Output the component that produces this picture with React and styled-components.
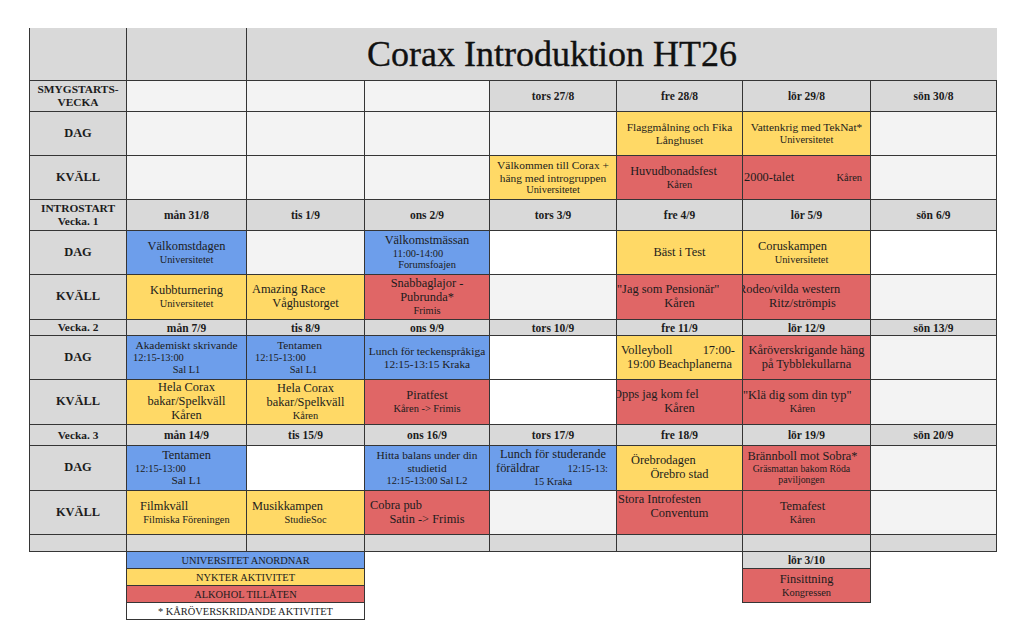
import React from 'react';
import styled, { createGlobalStyle } from 'styled-components';

const GlobalStyle = createGlobalStyle`
  html, body {
    margin: 0;
    padding: 0;
    background: #ffffff;
  }
  body {
    font-family: "Liberation Serif", "Times New Roman", serif;
    color: #1c1c1c;
  }
`;

// column / row tracks measured off the sheet (each includes its 1px grid line)
const COLS = '97px 120px 118px 125px 127px 126px 128px 126px';
const ROWS = '53px 31px 44px 44px 31px 44px 45px 16px 44px 45px 21px 45px 44px 17px';
const LINE = '#353535';

const FILL = {
  blue: '#6d9eeb',
  yellow: '#ffd966',
  red: '#e06666',
  white: '#ffffff',
  light: '#f3f3f3',
  gray: '#d9d9d9',
};

const SIZE = { L: 12.4, M: 11.4, S: 10.4, XS: 9.8 };

const Page = styled.div`
  padding: 28px 0 0 29px;
`;

const Table = styled.div`
  display: grid;
  grid-template-columns: ${COLS};
  grid-template-rows: ${ROWS};
  width: max-content;
  border-left: 1px solid ${LINE};
`;

const Cell = styled.div`
  box-sizing: border-box;
  min-width: 0;
  overflow: hidden;
  display: flex;
  flex-direction: column;
  justify-content: center;
  background: ${(p) => FILL[p.$fill]};
  border-right: 1px solid ${LINE};
  border-bottom: 1px solid ${LINE};
`;

const TitleCell = styled(Cell)`
  grid-column: 3 / 9;
  border-right: none;
  padding-left: 120px;
  font-size: 36px;
  -webkit-text-stroke: 0.35px #111;
  color: #111;
  white-space: nowrap;
`;

const RowLabel = styled(Cell)`
  align-items: center;
  text-align: center;
  font-weight: 700;
  font-size: ${(p) => p.$size}px;
  line-height: 1.1;
`;

const DateCell = styled(Cell)`
  align-items: center;
  font-weight: 700;
  font-size: 11.5px;
`;

const Line = styled.div`
  font-size: ${(p) => SIZE[p.$size]}px;
  line-height: 1.12;
  white-space: nowrap;
  text-align: ${(p) => p.$align};
  margin-left: ${(p) => p.$ml}px;
  padding-left: ${(p) => p.$pl}px;
  padding-right: ${(p) => p.$pr}px;
`;

const SplitLine = styled.div`
  display: flex;
  justify-content: space-between;
  align-items: baseline;
  white-space: nowrap;
  line-height: 1.12;
  padding: 0 ${(p) => p.$pr}px 0 ${(p) => p.$pl}px;
`;

const Part = styled.span`
  font-size: ${(p) => SIZE[p.$size]}px;
`;

const Footer = styled.div`
  display: grid;
  grid-template-columns: ${COLS};
  align-items: start;
  margin-left: 1px;
  width: max-content;
`;

const Legend = styled.div`
  grid-column: 2 / 4;
  margin-left: -1px;
  display: flex;
  flex-direction: column;
  border-left: 1px solid ${LINE};
  border-right: 1px solid ${LINE};
`;

const LegendRow = styled.div`
  box-sizing: border-box;
  height: 17px;
  display: flex;
  align-items: center;
  justify-content: center;
  font-size: 10.4px;
  background: ${(p) => FILL[p.$fill]};
  border-bottom: 1px solid ${LINE};
`;

const Extra = styled.div`
  grid-column: 7 / 8;
  margin-left: -1px;
  display: flex;
  flex-direction: column;
  border-left: 1px solid ${LINE};
  border-right: 1px solid ${LINE};
`;

const ExtraDate = styled.div`
  box-sizing: border-box;
  height: 17px;
  display: flex;
  align-items: center;
  justify-content: center;
  font-weight: 700;
  font-size: 11.5px;
  background: ${FILL.gray};
  border-bottom: 1px solid ${LINE};
`;

const ExtraEvent = styled.div`
  box-sizing: border-box;
  height: 34px;
  display: flex;
  flex-direction: column;
  justify-content: center;
  background: ${FILL.red};
  border-bottom: 1px solid ${LINE};
`;

// line helpers: centred (with optional nudge), left (with indent), split left/right
const c = (t, s = 'L', o = 0) => ({ t, s, a: 'center', o });
const l = (t, s = 'L', i = 4) => ({ t, s, a: 'left', i });
const sp = (a, as, b, bs, pl, pr) => ({ split: [[a, as], [b, bs]], pl, pr });
const d = (t) => ({ fill: 'gray', date: t });
const e = (fill = 'light') => ({ fill, lines: [] });
const ev = (fill, ...lines) => ({ fill, lines });
const dates = (list) => list.map((t) => d(t));

const rows = [
  {
    label: ['SMYGSTARTS-', 'VECKA'],
    cells: [e(), e(), e(), d('tors 27/8'), d('fre 28/8'), d('lör 29/8'), d('sön 30/8')],
  },
  {
    label: ['DAG'],
    big: true,
    cells: [
      e(), e(), e(), e(),
      ev('yellow', c('Flaggmålning och Fika', 'M'), c('Långhuset', 'M')),
      ev('yellow', c('Vattenkrig med TekNat*', 'M'), c('Universitetet', 'S')),
      e(),
    ],
  },
  {
    label: ['KVÄLL'],
    big: true,
    cells: [
      e(), e(), e(),
      ev('yellow', c('Välkommen till Corax +', 'M'), c('häng med introgruppen', 'M'), c('Universitetet', 'S')),
      ev('red', c('Huvudbonadsfest', 'L', -6), c('Kåren', 'S')),
      ev('red', sp('2000-talet', 'L', 'Kåren', 'S', 1, 8)),
      e(),
    ],
  },
  {
    label: ['INTROSTART', 'Vecka. 1'],
    cells: dates(['mån 31/8', 'tis 1/9', 'ons 2/9', 'tors 3/9', 'fre 4/9', 'lör 5/9', 'sön 6/9']),
  },
  {
    label: ['DAG'],
    big: true,
    cells: [
      ev('blue', c('Välkomstdagen'), c('Universitetet', 'S')),
      e(),
      ev('blue', c('Välkomstmässan'), c('11:00-14:00', 'S', -9), c('Forumsfoajen', 'S')),
      e('white'),
      ev('yellow', c('Bäst i Test')),
      ev('yellow', c('Coruskampen', 'L', -14), c('Universitetet', 'S', -5)),
      e('white'),
    ],
  },
  {
    label: ['KVÄLL'],
    big: true,
    cells: [
      ev('yellow', c('Kubbturnering'), c('Universitetet', 'S')),
      ev('yellow', l('Amazing Race', 'L', 5), c('Våghustorget')),
      ev('red', c('Snabbaglajor -'), c('Pubrunda*'), c('Frimis', 'S')),
      e(),
      ev('red', l('"Jag som Pensionär"', 'L', 0), c('Kåren')),
      ev('red', l('Rodeo/vilda western', 'L', -5), c('Ritz/strömpis', 'L', -4)),
      e(),
    ],
  },
  {
    label: ['Vecka. 2'],
    cells: dates(['mån 7/9', 'tis 8/9', 'ons 9/9', 'tors 10/9', 'fre 11/9', 'lör 12/9', 'sön 13/9']),
  },
  {
    label: ['DAG'],
    big: true,
    cells: [
      ev('blue', c('Akademiskt skrivande', 'M'), l('12:15-13:00', 'S', 6), c('Sal L1', 'S')),
      ev('blue', c('Tentamen', 'M', -6), l('12:15-13:00', 'S', 8), c('Sal L1', 'S', -2)),
      ev('blue', c('Lunch för teckenspråkiga', 'M'), c('12:15-13:15 Kraka', 'M')),
      e('white'),
      ev('yellow', sp('Volleyboll', 'L', '17:00-', 'L', 4, 7), c('19:00 Beachplanerna')),
      ev('red', c('Kåröverskrigande häng'), c('på Tybblekullarna')),
      e(),
    ],
  },
  {
    label: ['KVÄLL'],
    big: true,
    cells: [
      ev('yellow', c('Hela Corax'), c('bakar/Spelkväll'), c('Kåren')),
      ev('yellow', c('Hela Corax'), c('bakar/Spelkväll'), c('Kåren', 'S')),
      ev('red', c('Piratfest'), c('Kåren -> Frimis', 'S')),
      e('white'),
      ev('red', l('Opps jag kom fel', 'L', -4), c('Kåren')),
      ev('red', l('"Klä dig som din typ"', 'L', 0), c('Kåren', 'S', -4)),
      e(),
    ],
  },
  {
    label: ['Vecka. 3'],
    cells: dates(['mån 14/9', 'tis 15/9', 'ons 16/9', 'tors 17/9', 'fre 18/9', 'lör 19/9', 'sön 20/9']),
  },
  {
    label: ['DAG'],
    big: true,
    cells: [
      ev('blue', c('Tentamen'), l('12:15-13:00', 'S', 8), c('Sal L1', 'M')),
      e('white'),
      ev('blue', c('Hitta balans under din', 'M'), c('studietid', 'M'), c('12:15-13:00 Sal L2', 'S')),
      ev('blue', c('Lunch för studerande'), sp('föräldrar', 'L', '12:15-13:', 'S', 6, 8), c('15 Kraka', 'S')),
      ev('yellow', l('Örebrodagen', 'L', 14), c('Örebro stad')),
      ev('red', c('Brännboll mot Sobra*', 'L', -4), c('Gräsmattan bakom Röda', 'XS', -5), c('paviljongen', 'XS', -5)),
      e(),
    ],
  },
  {
    label: ['KVÄLL'],
    big: true,
    cells: [
      ev('yellow', l('Filmkväll', 'L', 13), c('Filmiska Föreningen', 'S')),
      ev('yellow', l('Musikkampen', 'L', 5), c('StudieSoc', 'S')),
      ev('red', l('Cobra pub', 'L', 5), c('Satin -> Frimis')),
      e(),
      ev('red', l('Stora Introfesten', 'L', 1), c('Conventum'), c('', 'S')),
      ev('red', c('Temafest', 'L', -4), c('Kåren', 'S', -4)),
      e(),
    ],
  },
  {
    label: [],
    cells: [e('gray'), e('gray'), e('gray'), e('gray'), e('gray'), e('gray'), e('gray')],
  },
];

const legend = [
  ['blue', 'UNIVERSITET ANORDNAR'],
  ['yellow', 'NYKTER AKTIVITET'],
  ['red', 'ALKOHOL TILLÅTEN'],
  ['white', '* KÅRÖVERSKRIDANDE AKTIVITET'],
];

const renderLine = (ln, i) => {
  if (ln.split) {
    const [[a, as], [b, bs]] = ln.split;
    return (
      <SplitLine key={i} $pl={ln.pl} $pr={ln.pr}>
        <Part $size={as}>{a}</Part>
        <Part $size={bs}>{b}</Part>
      </SplitLine>
    );
  }
  const left = ln.a === 'left';
  return (
    <Line
      key={i}
      $size={ln.s}
      $align={ln.a}
      $ml={left ? ln.i : 0}
      $pl={!left && ln.o > 0 ? ln.o * 2 : 0}
      $pr={!left && ln.o < 0 ? -ln.o * 2 : 0}
    >
      {ln.t || '\u00a0'}
    </Line>
  );
};

export default function App() {
  return (
    <>
      <GlobalStyle />
      <Page>
        <Table>
          <Cell $fill="gray" />
          <Cell $fill="gray" />
          <TitleCell $fill="gray">Corax Introduktion HT26</TitleCell>
          {rows.map((row, ri) => (
            <React.Fragment key={ri}>
              <RowLabel $fill="gray" $size={row.big ? 12.4 : 11.4}>
                {row.label.map((t) => (
                  <div key={t}>{t}</div>
                ))}
              </RowLabel>
              {row.cells.map((cell, ci) =>
                cell.date ? (
                  <DateCell key={ci} $fill="gray">
                    {cell.date}
                  </DateCell>
                ) : (
                  <Cell key={ci} $fill={cell.fill}>
                    {cell.lines.map(renderLine)}
                  </Cell>
                )
              )}
            </React.Fragment>
          ))}
        </Table>
        <Footer>
          <Legend>
            {legend.map(([fill, text]) => (
              <LegendRow key={text} $fill={fill}>
                {text}
              </LegendRow>
            ))}
          </Legend>
          <Extra>
            <ExtraDate>lör 3/10</ExtraDate>
            <ExtraEvent>
              <Line $size="L" $align="center" $ml={0} $pl={0} $pr={0}>
                Finsittning
              </Line>
              <Line $size="S" $align="center" $ml={0} $pl={0} $pr={0}>
                Kongressen
              </Line>
            </ExtraEvent>
          </Extra>
        </Footer>
      </Page>
    </>
  );
}
